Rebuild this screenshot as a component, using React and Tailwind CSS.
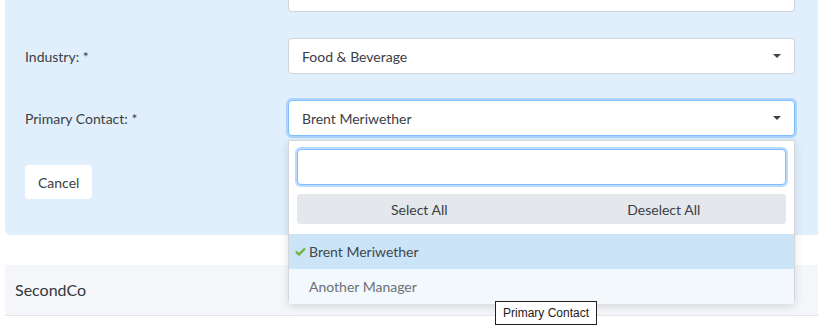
import { useState } from "react";

function Caret() {
  return (
    <svg width="8" height="4" viewBox="0 0 8 4" className="shrink-0">
      <path d="M0 0h8L4 4z" fill="#3d4246" />
    </svg>
  );
}

function Row({ label, children }) {
  return (
    <div className="flex items-center h-[36px]">
      <div className="w-[263px] text-[14px] text-[#3b4045]">{label}</div>
      <div className="flex-1 relative">{children}</div>
    </div>
  );
}

export default function App() {
  const [selected] = useState(["Brent Meriwether"]);
  const contacts = ["Brent Meriwether", "Another Manager"];

  return (
    <div
      className="relative h-[327px] w-[818px] overflow-hidden bg-white"
      style={{ fontFamily: "Lato, 'Noto Sans', sans-serif" }}
    >
      {/* edit panel */}
      <div className="ml-[5px] -mt-[24px] bg-[#e1effd] rounded-bl-[6px] pl-[20px] pr-[23px] pb-[36px]">
        <div className="flex flex-col gap-[26px]">
          <Row label="Name: *">
            <div className="h-[36px] bg-white border border-[#cfd4d9] rounded-[4px]" />
          </Row>
          <Row label="Industry: *">
            <div className="h-[36px] bg-white border border-[#cfd4d9] rounded-[4px] flex items-center justify-between pl-[13px] pr-[13px] text-[14px] text-[#3b4045]">
              <span>Food &amp; Beverage</span>
              <Caret />
            </div>
          </Row>
          <Row label="Primary Contact: *">
            <div className="h-[36px] bg-white border border-[#80bdff] shadow-[0_0_0_2px_rgba(128,189,255,0.55)] rounded-[4px] flex items-center justify-between pl-[13px] pr-[13px] text-[14px] text-[#3b4045]">
              <span>{selected[0]}</span>
              <Caret />
            </div>

            {/* open dropdown */}
            <div className="absolute left-0 right-0 top-full mt-[4px] h-[164px] z-10 bg-white border border-[#d3d7dc] rounded-b-[4px] shadow-[0_3px_8px_rgba(0,0,0,0.12)] flex flex-col">
              <div className="px-[8px] pt-[8px]">
                <div className="h-[36px] bg-white border border-[#80bdff] shadow-[0_0_0_2px_rgba(128,189,255,0.55)] rounded-[4px]" />
                <div className="mt-[9px] h-[30px] bg-[#e4e7eb] rounded-[3px] flex text-[14px] text-[#3b4045]">
                  <div className="flex-1 flex items-center justify-center">Select All</div>
                  <div className="flex-1 flex items-center justify-center">Deselect All</div>
                </div>
              </div>
              <div className="mt-[10px] flex flex-col">
                {contacts.map((c) => {
                  const on = selected.includes(c);
                  return (
                    <div
                      key={c}
                      className={
                        on
                          ? "h-[35px] flex items-center bg-[#cce4f7] text-[14px] text-[#42474c]"
                          : "h-[35px] flex items-center bg-[#f3f8fd] text-[14px] text-[#6a7178]"
                      }
                    >
                      <div className="w-[20px] flex justify-end pr-[3px]">
                        {on && (
                          <svg width="11" height="9" viewBox="0 0 11 9">
                            <path
                              d="M1 4.6l3 3L10 1.4"
                              fill="none"
                              stroke="#7cb342"
                              strokeWidth="2.4"
                              strokeLinejoin="round"
                            />
                          </svg>
                        )}
                      </div>
                      <span>{c}</span>
                    </div>
                  );
                })}
              </div>
            </div>
          </Row>
        </div>

        <div className="mt-[29px]">
          <button className="h-[34px] px-[13px] bg-white rounded-[4px] text-[14px] text-[#3b4045]">
            Cancel
          </button>
        </div>
      </div>

      {/* next company row */}
      <div className="ml-[5px] mt-[30px] h-[51px] bg-[#f4f6f9] border-b border-[#e2e6ea] flex items-center pl-[10px] text-[16px] text-[#33383d]">
        SecondCo
      </div>

      {/* browser tooltip */}
      <div
        className="absolute left-[495px] top-[301px] z-20 h-[24px] px-[7px] bg-white border border-[#1f1f1f] flex items-center text-[12px] text-[#1a1a1a]"
        style={{ fontFamily: "'Liberation Sans', sans-serif" }}
      >
        Primary Contact
      </div>
    </div>
  );
}
